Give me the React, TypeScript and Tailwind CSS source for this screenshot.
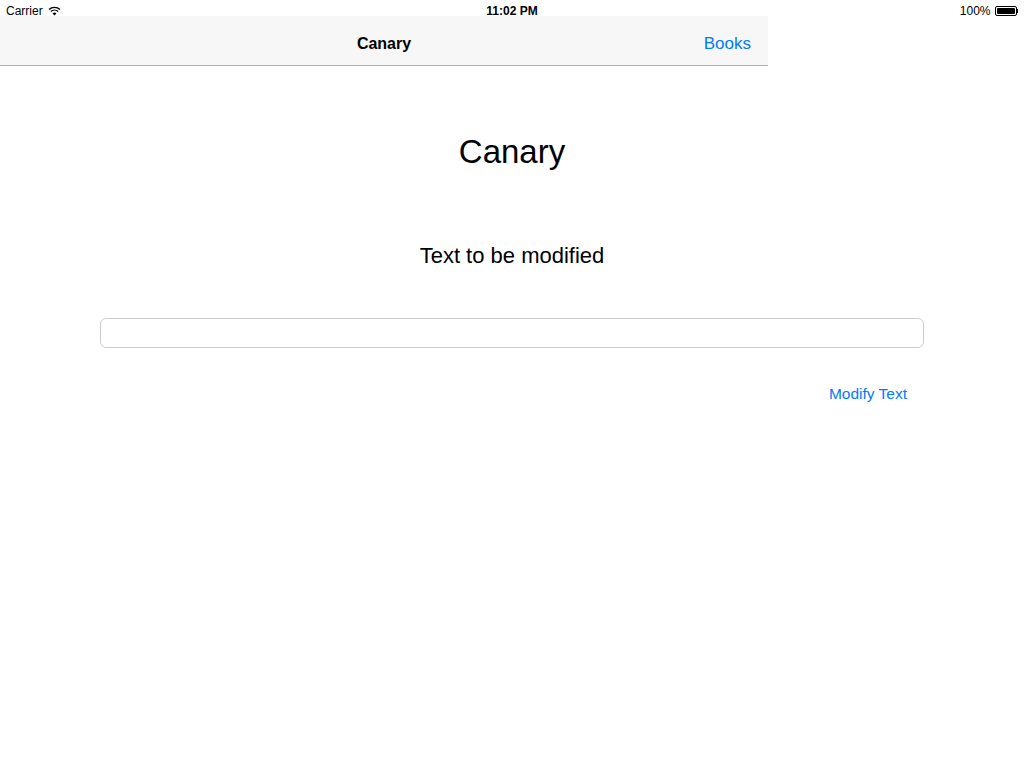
import React from "react";

export default function App() {
  return (
    <div className="w-[1024px] h-[768px] bg-white font-['Liberation_Sans',Arial,sans-serif] text-black overflow-hidden">
      {/* status bar */}
      <div className="h-4 flex items-center justify-between px-[6px] pt-[5px] text-[12px] leading-none relative">
        <div className="flex items-center gap-[5px]">
          <span>Carrier</span>
          <svg width="13" height="10" viewBox="0 0 13 10">
            <path d="M6.5 9.5 L4.6 7.4 A2.8 2.8 0 0 1 8.4 7.4 Z" fill="#000" />
            <path d="M2.9 5.6 A5.2 5.2 0 0 1 10.1 5.6" stroke="#000" strokeWidth="1.4" fill="none" />
            <path d="M1 3.6 A7.8 7.8 0 0 1 12 3.6" stroke="#000" strokeWidth="1.4" fill="none" />
          </svg>
        </div>
        <span className="absolute left-1/2 -translate-x-1/2 font-bold">11:02 PM</span>
        <div className="flex items-center gap-[4px]">
          <span>100%</span>
          <div className="flex items-center">
            <div className="w-[22px] h-[10px] border border-black rounded-[2px] p-[1px]">
              <div className="w-full h-full bg-black rounded-[1px]" />
            </div>
            <div className="w-[1.5px] h-[4px] bg-black" />
          </div>
        </div>
      </div>
      {/* nav bar */}
      <div className="w-[768px] h-[50px] pt-[6px] bg-[#f7f7f7] border-b border-[#b2b2b2] relative flex items-center justify-center">
        <span className="text-[16px] font-bold">Canary</span>
        <span className="absolute right-[17px] top-[6px] bottom-0 flex items-center text-[17px] text-[#007aff]">Books</span>
      </div>
      {/* content */}
      <div className="flex flex-col items-center">
        <div className="mt-[67px] text-[33px] leading-[38px]">Canary</div>
        <div className="mt-[72px] text-[22px] leading-[26px]">Text to be modified</div>
        <div className="mt-[49px] w-[824px] h-[30px] border border-[#cccccc] rounded-[6px]" />
        <div className="mt-[37px] self-end mr-[117px] text-[15.5px] leading-[18px] text-[#007aff]">Modify Text</div>
      </div>
    </div>
  );
}
